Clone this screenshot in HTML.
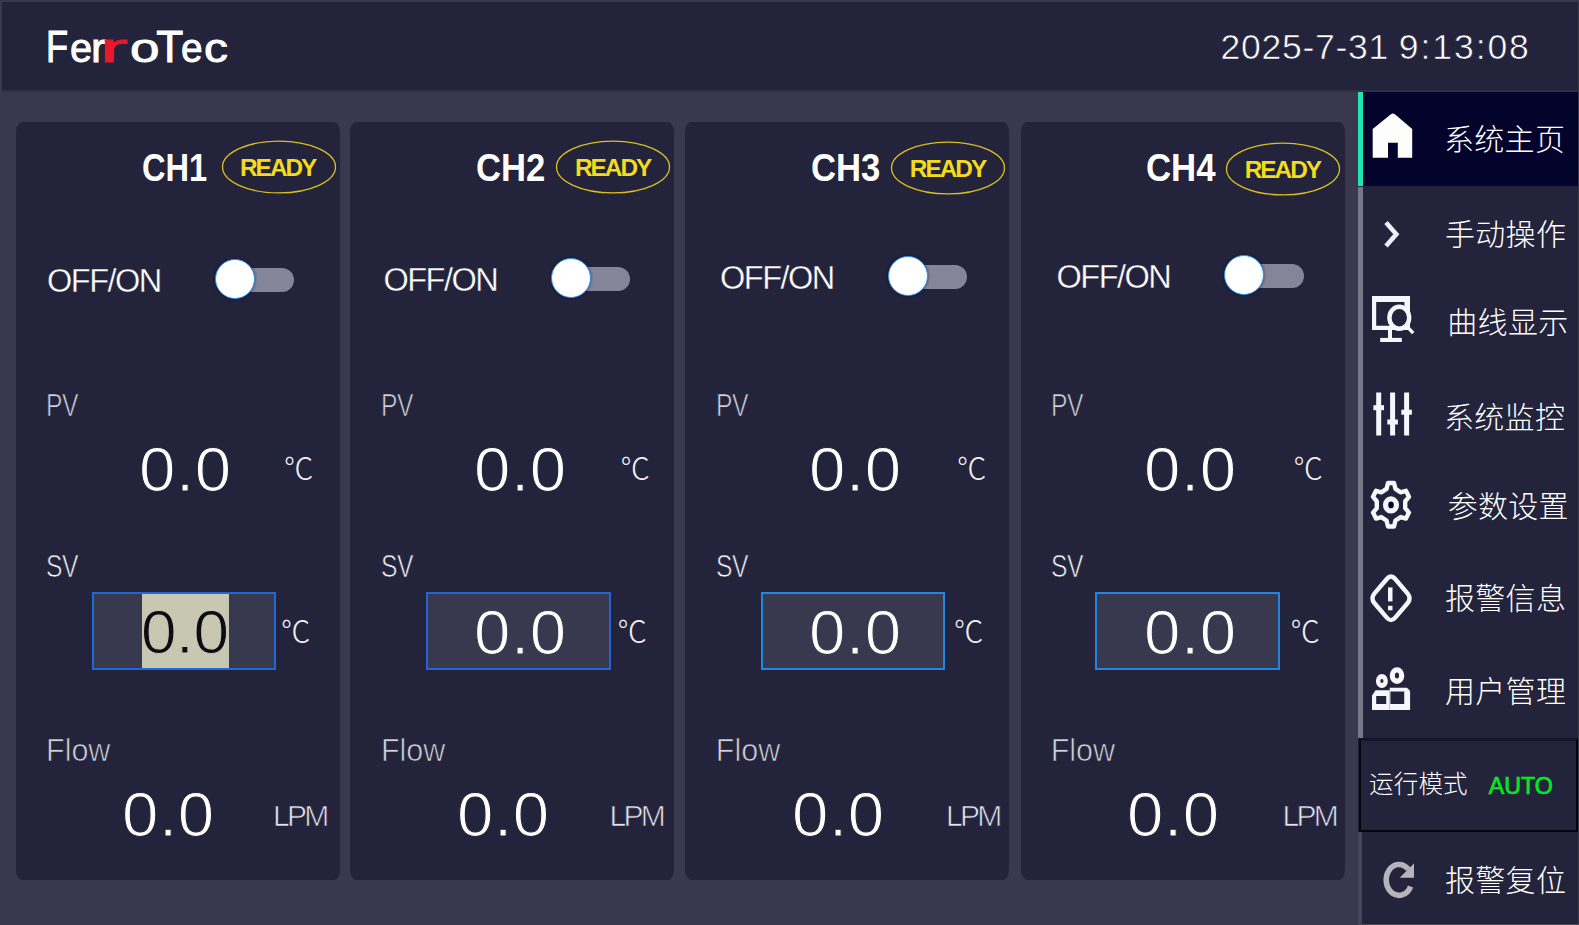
<!DOCTYPE html>
<html lang="zh-CN"><head><meta charset="utf-8"><title>FerroTec</title>
<style>
*{margin:0;padding:0;box-sizing:border-box}
html,body{width:1579px;height:925px;overflow:hidden;background:#38394f}
body{position:relative;font-family:"Liberation Sans","Noto Sans CJK SC",sans-serif;color:#fff}
.abs,.t{position:absolute}
.t{white-space:nowrap;line-height:1;transform-origin:0 0}
#header{position:absolute;left:2px;top:2px;width:1576px;height:88px;background:#23233b}
#side{position:absolute;left:1358px;top:92px;width:220px;height:831.5px;background:#23233b}
.card{position:absolute;top:122px;height:758px;width:324px;background:#23233b;border-radius:6px / 10px}
.cn{font-family:"Liberation Sans","Noto Sans CJK SC",sans-serif;font-weight:300}
.big{font-size:62.3px;letter-spacing:0.6px;transform:scaleX(1.05);-webkit-text-stroke:1.1px #23233b}
.lbl{font-size:30.5px;color:#d2d2da;-webkit-text-stroke:0.7px #23233b}
.unit{font-family:"Liberation Sans","Noto Sans CJK SC",sans-serif;font-weight:300;font-size:29.5px;color:#f0f0f4}
.ready{font-weight:700;font-size:24.4px;color:#f2dc1c;letter-spacing:-2px}
.ch{font-size:38px;font-weight:700}
</style></head>
<body>
<header id="header">
<div class="abs" style="left:0.0px;top:88.0px;width:1576px;height:2px;background:#2f3047"></div>
<div class="abs" id="logo" style="left:-2.0px;top:22.5px;font-size:44.2px;width:300px;height:50px"><span class="t" style="left:46.4px;top:0;transform-origin:0 37.4px;transform:scale(0.82,1);color:#fff;-webkit-text-stroke:1px #fff">F</span><span class="t" style="left:69.7px;top:0;transform-origin:0 37.4px;transform:scale(0.9,0.9);color:#fff;-webkit-text-stroke:1px #fff">e</span><span class="t" style="left:91.1px;top:0;transform-origin:0 37.4px;transform:scale(1,0.9);color:#fff;-webkit-text-stroke:1px #fff">r</span><span class="t" style="left:99.7px;top:0;transform-origin:0 37.4px;transform:scale(1.9,0.9);color:#e8192c;-webkit-text-stroke:1px #e8192c">r</span><span class="t" style="left:129.5px;top:0;transform-origin:0 37.4px;transform:scale(1.2,0.9);color:#fff;-webkit-text-stroke:1px #fff">o</span><span class="t" style="left:156.2px;top:0;transform-origin:0 37.4px;transform:scale(1.0,1);color:#fff;-webkit-text-stroke:1px #fff">T</span><span class="t" style="left:180.5px;top:0;transform-origin:0 37.4px;transform:scale(0.88,0.9);color:#fff;-webkit-text-stroke:1px #fff">e</span><span class="t" style="left:204px;top:0;transform-origin:0 37.4px;transform:scale(1.08,0.9);color:#fff;-webkit-text-stroke:1px #fff">c</span></div>
<div class="t" id="date" style="left:1218.5px;top:28.3px;font-size:35.6px;letter-spacing:0.7px;-webkit-text-stroke:0.6px #23233b;word-spacing:-0.8px">2025-7-31 <span style="letter-spacing:1.9px">9:13:08</span></div>
</header>
<main>
<section class="card" style="left:16px">
<div class="t ch" id="ch0" style="left:125.5px;top:27.0px;transform:scaleX(0.858)">CH1</div>
<svg class="abs" style="left:204.0px;top:14.5px" width="120" height="60" viewBox="0 0 120 60"><ellipse cx="59" cy="30" rx="56.5" ry="25.9" fill="none" stroke="#d8c020" stroke-width="1.3"/></svg>
<div class="t ready" id="rd0" style="left:224.0px;top:33.6px">READY</div>
<div class="t" id="oo0" style="left:31.0px;top:143.2px;font-size:32.5px;letter-spacing:-1.5px;-webkit-text-stroke:0.35px #23233b">OFF/ON</div>
<div class="abs" style="left:202.0px;top:146.0px;width:76px;height:24px;border-radius:12px;background:#85859a"></div>
<div class="abs" style="left:198.6px;top:137.3px;width:40px;height:40px;border-radius:50%;background:#fff;border:1.8px solid #2a90f4;box-shadow:0 0 3px rgba(0,0,16,0.55)"></div>
<div class="t lbl" id="pv0" style="left:30.0px;top:268.0px;transform:scaleX(0.81);letter-spacing:-0.5px">PV</div>
<div class="t big" id="pvv0" style="left:122.9px;top:317.2px">0.0</div>
<div class="t unit" id="pvu0" style="left:268.0px;top:332.0px">℃</div>
<div class="t lbl" id="sv0" style="left:30.0px;top:428.5px;transform:scaleX(0.81);letter-spacing:-0.5px;color:#f4f4f8">SV</div>
<div class="abs" style="left:75.8px;top:470.0px;width:184.5px;height:78px;background:#38394f;border:2px solid #2068d8"></div>
<div class="abs" style="left:126.0px;top:472.0px;width:86.5px;height:74px;background:#c8c8b2"></div>
<div class="t big" id="svv0" style="left:125.2px;top:478.7px;font-size:62px;letter-spacing:-0.4px;transform:scaleX(1.03);color:#0c0c14;-webkit-text-stroke:1px #c8c8b2">0.0</div>
<div class="t unit" id="svu0" style="left:265.0px;top:495.0px">℃</div>
<div class="t lbl" id="fl0" style="left:30.0px;top:613.0px">Flow</div>
<div class="t big" id="flv0" style="left:106.1px;top:662.2px">0.0</div>
<div class="t lbl" id="lpm0" style="left:257.0px;top:678.6px;font-size:30px;letter-spacing:-2.7px;color:#e4e4ea">LPM</div>
</section>
<section class="card" style="left:349.9px">
<div class="t ch" id="ch1" style="left:126.5px;top:27.0px;transform:scaleX(0.911)">CH2</div>
<svg class="abs" style="left:204.6px;top:15.2px" width="120" height="60" viewBox="0 0 120 60"><ellipse cx="59" cy="30" rx="56.5" ry="25.9" fill="none" stroke="#d8c020" stroke-width="1.3"/></svg>
<div class="t ready" id="rd1" style="left:225.0px;top:34.3px">READY</div>
<div class="t" id="oo1" style="left:33.6px;top:141.7px;font-size:32.5px;letter-spacing:-1.5px;-webkit-text-stroke:0.35px #23233b">OFF/ON</div>
<div class="abs" style="left:204.6px;top:144.5px;width:76px;height:24px;border-radius:12px;background:#85859a"></div>
<div class="abs" style="left:201.2px;top:135.8px;width:40px;height:40px;border-radius:50%;background:#fff;border:1.8px solid #2a90f4;box-shadow:0 0 3px rgba(0,0,16,0.55)"></div>
<div class="t lbl" id="pv1" style="left:31.0px;top:268.0px;transform:scaleX(0.81);letter-spacing:-0.5px">PV</div>
<div class="t big" id="pvv1" style="left:123.9px;top:317.2px">0.0</div>
<div class="t unit" id="pvu1" style="left:270.6px;top:332.0px">℃</div>
<div class="t lbl" id="sv1" style="left:31.0px;top:428.5px;transform:scaleX(0.81);letter-spacing:-0.5px;color:#f4f4f8">SV</div>
<div class="abs" style="left:76.4px;top:470.0px;width:184.5px;height:78px;background:#38394f;border:2px solid #2464d4"></div>
<div class="t big" id="svv1" style="left:123.9px;top:479.8px;-webkit-text-stroke:1.1px #38394f">0.0</div>
<div class="t unit" id="svu1" style="left:267.6px;top:495.0px">℃</div>
<div class="t lbl" id="fl1" style="left:31.0px;top:613.0px">Flow</div>
<div class="t big" id="flv1" style="left:107.1px;top:662.2px">0.0</div>
<div class="t lbl" id="lpm1" style="left:259.6px;top:678.6px;font-size:30px;letter-spacing:-2.7px;color:#e4e4ea">LPM</div>
</section>
<section class="card" style="left:685.0px">
<div class="t ch" id="ch2" style="left:126.3px;top:27.0px;transform:scaleX(0.913)">CH3</div>
<svg class="abs" style="left:204.0px;top:15.9px" width="120" height="60" viewBox="0 0 120 60"><ellipse cx="59" cy="30" rx="56.5" ry="25.9" fill="none" stroke="#d8c020" stroke-width="1.3"/></svg>
<div class="t ready" id="rd2" style="left:224.8px;top:35.0px">READY</div>
<div class="t" id="oo2" style="left:35.0px;top:140.2px;font-size:32.5px;letter-spacing:-1.5px;-webkit-text-stroke:0.35px #23233b">OFF/ON</div>
<div class="abs" style="left:206.0px;top:143.0px;width:76px;height:24px;border-radius:12px;background:#85859a"></div>
<div class="abs" style="left:202.6px;top:134.3px;width:40px;height:40px;border-radius:50%;background:#fff;border:1.8px solid #2a90f4;box-shadow:0 0 3px rgba(0,0,16,0.55)"></div>
<div class="t lbl" id="pv2" style="left:30.8px;top:268.0px;transform:scaleX(0.81);letter-spacing:-0.5px">PV</div>
<div class="t big" id="pvv2" style="left:123.7px;top:317.2px">0.0</div>
<div class="t unit" id="pvu2" style="left:272.0px;top:332.0px">℃</div>
<div class="t lbl" id="sv2" style="left:30.8px;top:428.5px;transform:scaleX(0.81);letter-spacing:-0.5px;color:#f4f4f8">SV</div>
<div class="abs" style="left:75.8px;top:470.0px;width:184.5px;height:78px;background:#38394f;border:2px solid #2088e2"></div>
<div class="t big" id="svv2" style="left:123.7px;top:479.8px;-webkit-text-stroke:1.1px #38394f">0.0</div>
<div class="t unit" id="svu2" style="left:269.0px;top:495.0px">℃</div>
<div class="t lbl" id="fl2" style="left:30.8px;top:613.0px">Flow</div>
<div class="t big" id="flv2" style="left:106.9px;top:662.2px">0.0</div>
<div class="t lbl" id="lpm2" style="left:261.0px;top:678.6px;font-size:30px;letter-spacing:-2.7px;color:#e4e4ea">LPM</div>
</section>
<section class="card" style="left:1020.5px">
<div class="t ch" id="ch3" style="left:125.7px;top:27.0px;transform:scaleX(0.915)">CH4</div>
<svg class="abs" style="left:203.0px;top:16.6px" width="120" height="60" viewBox="0 0 120 60"><ellipse cx="59" cy="30" rx="56.5" ry="25.9" fill="none" stroke="#d8c020" stroke-width="1.3"/></svg>
<div class="t ready" id="rd3" style="left:224.2px;top:35.7px">READY</div>
<div class="t" id="oo3" style="left:36.0px;top:138.7px;font-size:32.5px;letter-spacing:-1.5px;-webkit-text-stroke:0.35px #23233b">OFF/ON</div>
<div class="abs" style="left:207.0px;top:141.5px;width:76px;height:24px;border-radius:12px;background:#85859a"></div>
<div class="abs" style="left:203.6px;top:132.8px;width:40px;height:40px;border-radius:50%;background:#fff;border:1.8px solid #2a90f4;box-shadow:0 0 3px rgba(0,0,16,0.55)"></div>
<div class="t lbl" id="pv3" style="left:30.2px;top:268.0px;transform:scaleX(0.81);letter-spacing:-0.5px">PV</div>
<div class="t big" id="pvv3" style="left:123.1px;top:317.2px">0.0</div>
<div class="t unit" id="pvu3" style="left:273.0px;top:332.0px">℃</div>
<div class="t lbl" id="sv3" style="left:30.2px;top:428.5px;transform:scaleX(0.81);letter-spacing:-0.5px;color:#f4f4f8">SV</div>
<div class="abs" style="left:74.8px;top:470.0px;width:184.5px;height:78px;background:#38394f;border:2px solid #2484e2"></div>
<div class="t big" id="svv3" style="left:123.1px;top:479.8px;-webkit-text-stroke:1.1px #38394f">0.0</div>
<div class="t unit" id="svu3" style="left:270.0px;top:495.0px">℃</div>
<div class="t lbl" id="fl3" style="left:30.2px;top:613.0px">Flow</div>
<div class="t big" id="flv3" style="left:106.3px;top:662.2px">0.0</div>
<div class="t lbl" id="lpm3" style="left:262.0px;top:678.6px;font-size:30px;letter-spacing:-2.7px;color:#e4e4ea">LPM</div>
</section>
</main>
<nav id="side">
<div class="abs" style="left:0.0px;top:831.5px;width:221px;height:1.5px;background:#4a4a59"></div>
<div class="abs" style="left:4.5px;top:0.0px;width:215.5px;height:93.5px;background:#03032b"></div>
<div class="abs" style="left:0.0px;top:0.0px;width:4.5px;height:93.5px;background:#1ee6b4"></div>
<div class="abs" style="left:0.0px;top:95.0px;width:4.5px;height:551px;background:#77778a"></div>
<div class="abs" style="left:0.0px;top:740.0px;width:4px;height:93px;background:#45455a"></div>
<div class="abs" style="left:0.5px;top:646.2px;width:219.5px;height:94px;border:solid #05050c;border-width:3.5px 2px 2.4px 2.8px;border-top-color:#14142a;background:#23233b"></div>
<div class="t cn" id="m0" style="left:86.0px;top:32.9px;font-size:30px;letter-spacing:0.3px">系统主页</div>
<div class="t cn" id="m1" style="left:87.0px;top:127.5px;font-size:30px;letter-spacing:0.3px">手动操作</div>
<div class="t cn" id="m2" style="left:89.3px;top:215.6px;font-size:30px;letter-spacing:0.3px">曲线显示</div>
<div class="t cn" id="m3" style="left:86.0px;top:311.3px;font-size:30px;letter-spacing:0.3px">系统监控</div>
<div class="t cn" id="m4" style="left:89.7px;top:399.5px;font-size:30px;letter-spacing:0.3px">参数设置</div>
<div class="t cn" id="m5" style="left:87.0px;top:492.2px;font-size:30px;letter-spacing:0.3px">报警信息</div>
<div class="t cn" id="m6" style="left:87.0px;top:585.2px;font-size:30px;letter-spacing:0.3px">用户管理</div>
<div class="t cn" id="m7" style="left:87.0px;top:773.7px;font-size:30px;letter-spacing:0.3px">报警复位</div>
<div class="t cn" id="mode" style="left:11.0px;top:681.0px;font-size:24.5px;letter-spacing:0.2px">运行模式</div>
<div class="t" id="auto" style="left:130.8px;top:683.2px;font-size:23.2px;letter-spacing:0px;color:#06e826;-webkit-text-stroke:0.7px #06e826">AUTO</div>
<svg class="abs" style="left:12.0px;top:18.0px" width="46" height="52" viewBox="0 0 46 52"><path d="M20.6 4.6 Q22.9 2.6 25.2 4.6 L42.2 18.9 V47.7 H27.8 V32.7 H18 V47.7 H2.7 V18.9 Z" fill="#fdfdfb"/></svg>
<svg class="abs" style="left:20.0px;top:124.0px" width="28" height="36" viewBox="0 0 28 36"><path d="M8 6.5 L18.3 18.2 L8 29.9" fill="none" stroke="#eeeefa" stroke-width="4.6"/></svg>
<svg class="abs" style="left:10.0px;top:200.0px" width="50" height="54" viewBox="0 0 50 54">
<path d="M4 4 H42 V38 H4 Z M8.2 10 V33.8 H36.4 V10 Z" fill="#f6f6fd" fill-rule="evenodd"/>
<rect x="20" y="37" width="4" height="10" fill="#f6f6fd"/>
<rect x="12.2" y="45.9" width="21.6" height="4.1" fill="#f6f6fd"/>
<ellipse cx="31.3" cy="25.8" rx="9.9" ry="11" fill="#23233b" stroke="#f6f6fd" stroke-width="4.4"/>
<path d="M39.6 35.2 L45.2 41.2" stroke="#f6f6fd" stroke-width="3.4"/>
</svg>
<svg class="abs" style="left:10.0px;top:296.0px" width="48" height="52" viewBox="0 0 48 52">
<g fill="#f6f6fd"><rect x="8.2" y="4.5" width="5" height="43"/><rect x="22.1" y="4.5" width="5" height="43"/><rect x="36.1" y="4.5" width="5" height="43"/>
<rect x="5.4" y="17.2" width="10.6" height="5"/><rect x="19.3" y="31.5" width="10.6" height="5"/><rect x="33.3" y="21.7" width="10.6" height="5"/></g></svg>
<svg class="abs" style="left:8.0px;top:384.5px" width="50" height="56" viewBox="0 0 50 56">
<path d="M20.51 11.91 L21.99 5.97 L28.01 5.97 L29.49 11.91 L34.72 15.36 L39.96 13.85 L42.97 19.82 L39.21 24.25 L39.21 31.15 L42.97 35.58 L39.96 41.55 L34.72 40.04 L29.49 43.49 L28.01 49.43 L21.99 49.43 L20.51 43.49 L15.28 40.04 L10.04 41.55 L7.03 35.58 L10.79 31.15 L10.79 24.25 L7.03 19.82 L10.04 13.85 L15.28 15.36Z" fill="none" stroke="#f6f6fd" stroke-width="4.4" stroke-linejoin="round"/>
<ellipse cx="25" cy="27.9" rx="5.4" ry="6.0" fill="#06062e" stroke="#f6f6fd" stroke-width="5.2"/></svg>
<svg class="abs" style="left:8.0px;top:478.0px" width="50" height="58" viewBox="0 0 50 58">
<path d="M20.78 8.95 Q25.00 4.00 29.22 8.95 L41.48 23.35 Q45.70 28.30 41.48 33.25 L29.22 47.65 Q25.00 52.60 20.78 47.65 L8.52 33.25 Q4.30 28.30 8.52 23.35Z" fill="none" stroke="#f6f6fd" stroke-width="4.4" stroke-linejoin="round"/>
<rect x="22" y="17.4" width="4.5" height="14" fill="#f6f6fd"/><rect x="22" y="35.8" width="4.5" height="4.5" fill="#f6f6fd"/></svg>
<svg class="abs" style="left:10.0px;top:572.0px" width="48" height="50" viewBox="0 0 48 50">
<g fill="#f6f6fd" fill-rule="evenodd">
<path d="M7.9 17 a6 7 0 1 0 12 0 a6 7 0 1 0 -12 0 Z M12.3 17 a1.6 2 0 1 0 3.2 0 a1.6 2 0 1 0 -3.2 0 Z"/>
<path d="M21.7 11.6 a7.3 8.3 0 1 0 14.6 0 a7.3 8.3 0 1 0 -14.6 0 Z M26.9 11.6 a2.1 3 0 1 0 4.2 0 a2.1 3 0 1 0 -4.2 0 Z"/>
<path d="M7.6 26.2 H21.7 V45.9 H4 V31.6 Z M8.2 32 V40 H18.2 V32 Z"/>
<path d="M21.7 23.7 H39 L42.1 27 V45.9 H21.7 Z M22.4 27.6 V40 H36.2 V27.6 Z"/>
</g></svg>
<svg class="abs" style="left:20.0px;top:764.0px" width="44" height="48" viewBox="0 0 44 48">
<path d="M30.2 13.2 A12.8 15.4 0 1 0 32.6 30.4" fill="none" stroke="#b7b3bb" stroke-width="5.6"/>
<path d="M36 7.4 V21.8 H21.6 Z" fill="#b7b3bb"/></svg>
</nav>
</body></html>
